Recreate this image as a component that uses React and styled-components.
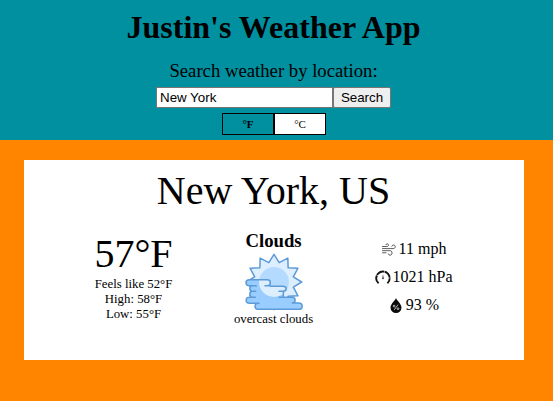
import React, { useState } from 'react';
import styled, { createGlobalStyle } from 'styled-components';

const GlobalStyle = createGlobalStyle`
  body {
    margin: 0;
    background: #ff8400;
    color: #000;
    font-family: "Liberation Serif", "Times New Roman", serif;
    overflow: hidden;
  }
`;

const Page = styled.div`
  min-height: 401px;
`;

const Header = styled.header`
  box-sizing: border-box;
  height: 140px;
  padding: 9px 6px 0 0;
  background: #0090a0;
  display: flex;
  flex-direction: column;
  align-items: center;
`;

const Title = styled.h1`
  margin: 0;
  font-size: 32px;
  line-height: 36px;
`;

const SearchForm = styled.form`
  display: flex;
  flex-direction: column;
  align-items: center;
  margin: 15px 0 0;
`;

const SearchLabel = styled.label`
  font-size: 18.72px;
  line-height: 22px;
`;

const SearchRow = styled.div`
  display: flex;
  margin-top: 5px;
`;

const SearchInput = styled.input`
  box-sizing: border-box;
  width: 177px;
  height: 21px;
  margin: 0;
  padding: 1px 3px;
  border: 1px solid #767676;
  background: #fff;
  font: 13.333px "Liberation Sans", Arial, sans-serif;
`;

const SearchButton = styled.button`
  box-sizing: border-box;
  width: 58px;
  height: 21px;
  margin: 0;
  padding: 0;
  border: 1px solid #767676;
  border-radius: 2px;
  background: #efefef;
  color: #000;
  font: 13.333px "Liberation Sans", Arial, sans-serif;
`;

const UnitToggle = styled.div`
  display: flex;
  margin: 5px 0 0 1px;
`;

const UnitButton = styled.button`
  box-sizing: border-box;
  width: 52px;
  height: 22px;
  margin: 0;
  padding: 0;
  border: 1px solid #000;
  background: ${({ $active }) => ($active ? '#0090a0' : '#fff')};
  color: #000;
  font-family: inherit;
  font-size: 11px;
  font-weight: ${({ $active }) => ($active ? 'bold' : 'normal')};
`;

const Card = styled.main`
  box-sizing: border-box;
  width: 500px;
  height: 200px;
  margin: 20px 0 0 24px;
  padding: 8px 1px 0 0;
  background: #fff;
  text-align: center;
`;

const City = styled.div`
  font-size: 40px;
  line-height: 46px;
`;

const Columns = styled.div`
  display: grid;
  grid-template-columns: repeat(3, 140px);
  justify-content: center;
  margin-top: 17px;
`;

const Column = styled.section`
  display: flex;
  flex-direction: column;
  align-items: center;
`;

const Temperature = styled.div`
  margin-bottom: 1px;
  font-size: 40px;
  line-height: 45px;
`;

const Small = styled.div`
  font-size: 12.8px;
  line-height: 15px;
  white-space: nowrap;
`;

const Condition = styled.div`
  margin-bottom: 2px;
  font-size: 18.72px;
  font-weight: bold;
  line-height: 19px;
`;

const Metrics = styled(Column)`
  padding-top: 4px;
`;

const Metric = styled.div`
  display: flex;
  align-items: center;
  gap: 2px;
  height: 28px;
  font-size: 16px;
  line-height: 28px;
`;

const CloudArt = styled.svg`
  display: block;
  width: 62px;
  height: 60px;
  margin-left: 3px;
`;

const MetricArt = styled.svg`
  display: block;
  width: 16px;
  height: 16px;
`;

const SUN = { x: 90, y: 90, tip: 83, base: 60 };

const sunPoints = Array.from({ length: 24 }, (_, i) => {
  const radius = i % 2 ? SUN.base : SUN.tip;
  const angle = ((i * 15 - 90) * Math.PI) / 180;
  return `${SUN.x + radius * Math.cos(angle)},${SUN.y + radius * Math.sin(angle)}`;
}).join(' ');

const cloudShape =
  'M16 83H70C82 83 82 101 70 101H63L78 103H116C130 103 130 118 118 118V136H145C156 136 156 153 145 153H164C178 153 178 172 164 172H42C30 172 30 154 42 154H17C3 154 3 136 17 136H24C15 136 15 118 25 118C15 118 15 101 25 101H16C3 101 3 83 16 83Z';

function CloudIcon() {
  return (
    <CloudArt viewBox="0 0 186 180" aria-label="Clouds">
      <defs>
        <clipPath id="cloud-body"><path d={cloudShape} /></clipPath>
      </defs>
      <polygon points={sunPoints} fill="#ddeeff" stroke="#5c9bd8" strokeWidth="4.5" strokeLinejoin="round" />
      <circle cx="90" cy="90" r="45" fill="#b4dbff" />
      <path d={cloudShape} fill="#99ccff" />
      <circle cx="90" cy="90" r="45" fill="#ddeeff" clipPath="url(#cloud-body)" />
      <path
        d="M63 101H70C82 101 82 83 70 83H16C3 83 3 101 16 101H37M25 101C15 101 15 118 25 118H35M25 118C15 118 15 136 25 136H34M24 136H17C3 136 3 154 17 154H45M42 154C30 154 30 172 42 172H164C178 172 178 153 164 153H145C156 153 156 136 145 136H105M118 136V118M105 118H116C130 118 130 103 116 103H78"
        fill="none" stroke="#5c9bd8" strokeWidth="4.5" strokeLinecap="round" strokeLinejoin="round"
      />
    </CloudArt>
  );
}

function WindIcon() {
  return (
    <MetricArt viewBox="0 0 16 16" fill="none" stroke="#333" strokeWidth=".8" strokeLinecap="round">
      <path d="M1.5 5.5H5.8C8 5.5 7.9 2.8 6.2 2.8Q5.1 2.8 4.9 3.7M1.5 7.6H12.2C14.9 7.6 14.8 4 12.6 4Q11 4 10.8 5.2M1.5 9.7H9.2C11.7 9.7 11.6 14.2 9.1 14.2Q7.6 14.2 7.4 12.9M1.5 11.8H5" />
    </MetricArt>
  );
}

function GaugeIcon() {
  return (
    <MetricArt viewBox="0 0 16 16" fill="none">
      <path d="M3.6 14.3A6.7 6.7 0 1 1 12.4 14.3" stroke="#111" strokeWidth="1.9" strokeDasharray="8.2 .5" />
      <path d="M8 5.3L8.7 9A.8 .8 0 1 1 7.3 9Z" fill="#333" />
    </MetricArt>
  );
}

function HumidityIcon() {
  return (
    <MetricArt viewBox="0 0 16 16">
      <path d="M8 .9C7.4 3.1 2.5 6.9 2.5 10.5A5.5 5.5 0 0 0 13.5 10.5C13.5 6.9 8.6 3.1 8 .9Z" fill="#0b0b0b" />
      <g fill="none" stroke="#ddd" strokeWidth=".8">
        <path d="M10 7.7L6.2 12.9" />
        <circle cx="6.1" cy="9.1" r=".9" />
        <circle cx="10" cy="11.7" r=".9" />
      </g>
    </MetricArt>
  );
}

export default function App() {
  const [query, setQuery] = useState('New York');
  return (
    <Page>
      <GlobalStyle />
      <Header>
        <Title>Justin's Weather App</Title>
        <SearchForm onSubmit={(event) => event.preventDefault()}>
          <SearchLabel htmlFor="location">Search weather by location:</SearchLabel>
          <SearchRow>
            <SearchInput id="location" value={query} onChange={(event) => setQuery(event.target.value)} />
            <SearchButton>Search</SearchButton>
          </SearchRow>
        </SearchForm>
        <UnitToggle>
          <UnitButton $active>°F</UnitButton>
          <UnitButton>°C</UnitButton>
        </UnitToggle>
      </Header>
      <Card>
        <City>New York, US</City>
        <Columns>
          <Column>
            <Temperature>57°F</Temperature>
            <Small>Feels like 52°F</Small>
            <Small>High: 58°F</Small>
            <Small>Low: 55°F</Small>
          </Column>
          <Column>
            <Condition>Clouds</Condition>
            <CloudIcon />
            <Small>overcast clouds</Small>
          </Column>
          <Metrics>
            <Metric><WindIcon />11 mph</Metric>
            <Metric><GaugeIcon />1021 hPa</Metric>
            <Metric><HumidityIcon />93 %</Metric>
          </Metrics>
        </Columns>
      </Card>
    </Page>
  );
}
